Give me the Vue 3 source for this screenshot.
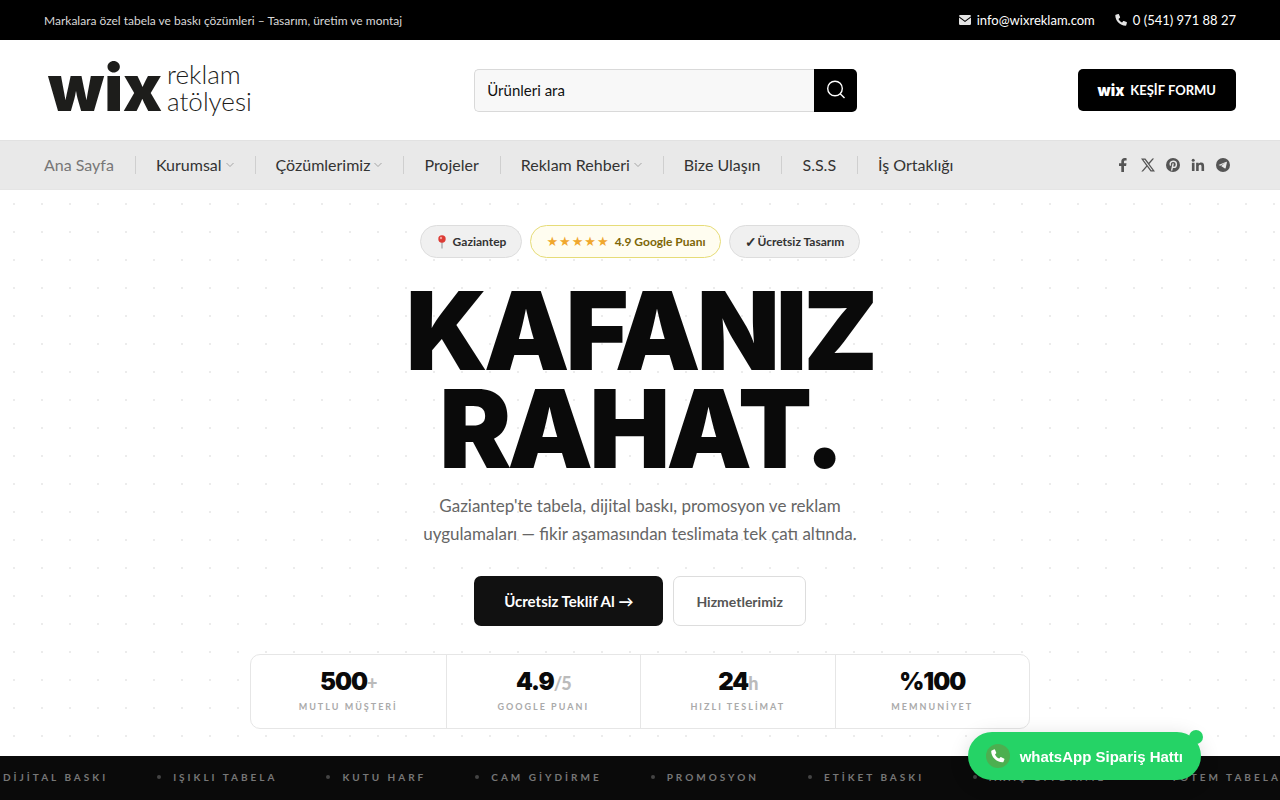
<script setup>
import { ref } from 'vue';

const search = ref('');

const menu = [
  { label: 'Ana Sayfa', active: true },
  { label: 'Kurumsal', children: true },
  { label: 'Çözümlerimiz', children: true },
  { label: 'Projeler' },
  { label: 'Reklam Rehberi', children: true },
  { label: 'Bize Ulaşın' },
  { label: 'S.S.S' },
  { label: 'İş Ortaklığı' },
];

const stats = [
  { value: '500', suffix: '+', label: 'MUTLU MÜŞTERİ' },
  { value: '4.9', suffix: '/5', label: 'GOOGLE PUANI' },
  { value: '24', suffix: 'h', label: 'HIZLI TESLİMAT' },
  { value: '%100', suffix: '', label: 'MEMNUNİYET' },
];

const services = [
  'DİJİTAL BASKI',
  'IŞIKLI TABELA',
  'KUTU HARF',
  'CAM GİYDİRME',
  'PROMOSYON',
  'ETİKET BASKI',
  'ARAÇ GİYDİRME',
  'TOTEM TABELA',
];
</script>

<template>
  <div class="page">
    <div class="topbar">
      <span class="slogan">Markalara özel tabela ve baskı çözümleri – Tasarım, üretim ve montaj</span>
      <div class="contacts">
        <a href="#">
          <svg width="12" height="10" viewBox="0 0 12 10">
            <path d="M0 1.2Q0 0 1.2 0h9.600Q12 0 12 1.200L6 5.700 0 1.200z" fill="#e4e4e4" />
            <path d="M0 2.500l6 4.500 6-4.500v6.300q0 1.200-1.200 1.200H1.200Q0 10 0 8.800z" fill="#e4e4e4" />
          </svg>
          info@wixreklam.com
        </a>
        <a href="#">
          <svg width="12" height="12" viewBox="0 0 24 24">
            <path d="M1.500 1.500L6.500.2c.6-.1 1.100.1 1.400.7l2.200 5.300c.2.500.1 1-.3 1.300L7 9.800c1.600 3.200 4 5.600 7.200 7.200l2.300-2.800c.3-.4.800-.5 1.300-.3l5.300 2.200c.6.300.8.800.7 1.400l-1.300 5c-.1.600-.600.900-1.200.9C9.700 23.400.6 14.300.6 2.700c0-.6.400-1.100.9-1.200z" fill="#e4e4e4" />
          </svg>
          0 (541) 971 88 27
        </a>
      </div>
    </div>

    <header class="header">
      <a href="#" class="logo">
        <span class="logo-mark">wix</span>
        <span class="logo-name">reklam<br>atölyesi</span>
      </a>
      <form class="search" @submit.prevent>
        <input v-model="search" type="text" placeholder="Ürünleri ara" aria-label="Ürünleri ara">
        <button type="submit" aria-label="Ara">
          <svg width="20" height="20" viewBox="0 0 20 20" fill="none" stroke="#fff" stroke-width="1.4">
            <circle cx="9" cy="8.500" r="7.300" />
            <path d="M14.200 13.700L18.500 18" />
          </svg>
        </button>
      </form>
      <a href="#" class="form-button"><span class="mini-mark">wix</span>KEŞİF FORMU</a>
    </header>

    <nav class="nav">
      <ul class="menu">
        <li v-for="item in menu" :key="item.label">
          <a href="#" :class="{ active: item.active }">
            {{ item.label }}
            <svg v-if="item.children" width="8" height="6" viewBox="0 0 8 6" fill="none" stroke="#a5a5a5">
              <path d="M.5 1L4 4.500 7.500 1" />
            </svg>
          </a>
        </li>
      </ul>
      <div class="social">
        <a href="#" aria-label="Facebook">
          <svg width="14" height="14" viewBox="0 0 14 14">
            <path d="M5.300 14V7.900H3V5.300h2.300V3.600C5.300 1.300 6.600 0 8.700 0c1 0 1.900.2 1.900.2v2.200H9.400C8.300 2.400 8 3 8 3.700v1.600h2.500l-.4 2.600H8V14z" />
          </svg>
        </a>
        <a href="#" aria-label="X">
          <svg width="14" height="14" viewBox="0 0 14 14">
            <path d="M0 .5h4.400l3.200 4.300L11.400.5h1.700L8.400 5.900l5.600 7.600H9.600L6.100 8.800 2 13.500H.3l5-5.700zm2.400 1.200l7.900 10.600h1.300L3.700 1.700z" />
          </svg>
        </a>
        <a href="#" aria-label="Pinterest">
          <svg width="14" height="14" viewBox="0 0 14 14">
            <circle cx="7" cy="7" r="7" />
            <path d="M4.600 7.600C3.300 5.200 4.900 3.200 7.200 3.200c2 0 3.200 1.300 3.200 3 0 1.900-1.100 3.200-2.500 3.200-.7 0-1.200-.4-1.400-.9M7.200 5.300L5.600 12.600" fill="none" stroke="#e9e9e9" stroke-width="1.400" />
          </svg>
        </a>
        <a href="#" aria-label="LinkedIn">
          <svg width="14" height="14" viewBox="0 0 14 14">
            <circle cx="2.200" cy="2.200" r="1.500" />
            <path d="M.9 4.700h2.600V13H.9zM5.100 4.700h2.500v1.100c.4-.7 1.300-1.300 2.500-1.300 2.500 0 3 1.600 3 3.900V13h-2.600V8.900c0-1 0-2.200-1.300-2.200S7.700 7.700 7.700 8.800V13H5.100z" />
          </svg>
        </a>
        <a href="#" aria-label="Telegram">
          <svg width="14" height="14" viewBox="0 0 14 14">
            <circle cx="7" cy="7" r="7" />
            <path d="M2.500 7.100l7.900-3.300c.4-.1.600.1.500.6l-1.200 5.700c-.1.400-.4.500-.8.300L5.100 8.100l4.200-3.300-5 2.900z" fill="#e9e9e9" />
          </svg>
        </a>
      </div>
    </nav>

    <main class="hero">
      <div class="badges">
        <span class="badge">
          <svg width="12" height="14" viewBox="0 0 12 14">
            <path d="M5.500 6h1v7l-.5 1-.5-1z" fill="#8d8f94" />
            <circle cx="6" cy="4" r="3.700" fill="#dd3b35" />
            <circle cx="5" cy="3" r="1.200" fill="#f2a09a" />
          </svg>
          Gaziantep
        </span>
        <span class="badge gold"><span class="stars">★★★★★</span>4.9 Google Puanı</span>
        <span class="badge tight"><span class="tick">✓</span>Ücretsiz Tasarım</span>
      </div>

      <h1>KAFANIZ<br>RAHAT.</h1>
      <p class="lead">
        Gaziantep'te tabela, dijital baskı, promosyon ve reklam uygulamaları — fikir aşamasından teslimata tek çatı altında.
      </p>

      <div class="actions">
        <a href="#" class="primary">Ücretsiz Teklif Al →</a>
        <a href="#" class="secondary">Hizmetlerimiz</a>
      </div>

      <div class="stats">
        <div v-for="stat in stats" :key="stat.label" class="stat">
          <div class="stat-value">{{ stat.value }}<span>{{ stat.suffix }}</span></div>
          <div class="stat-label">{{ stat.label }}</div>
        </div>
      </div>
    </main>

    <div class="ticker">
      <div class="track">
        <span v-for="service in services" :key="service" class="service">{{ service }}</span>
      </div>
    </div>

    <a href="#" class="whatsapp">
      <svg width="24" height="24" viewBox="0 0 24 24">
        <circle cx="12" cy="12" r="12" fill="#4caf50" />
        <path d="M5.800 6.400l2.100-1c.5-.2.900 0 1.100.4l1.200 2.600c.2.400.1.800-.2 1.100l-1 .9c.8 1.800 2.400 3.400 4.200 4.200l1-1.200c.3-.3.700-.4 1.100-.2l2.700 1.200c.4.200.6.600.4 1.100l-.9 2.200c-.2.400-.5.600-.9.600C10.300 18.100 5.200 13 5.200 7.300c0-.4.200-.7.600-.9z" fill="#fff" />
      </svg>
      whatsApp Sipariş Hattı
      <span class="ping"></span>
    </a>
  </div>
</template>

<style>
body {
  margin: 0;
  background: #000;
}
</style>

<style scoped>
* {
  box-sizing: border-box;
}

.page {
  height: 100vh;
  overflow: hidden;
  background: #0a0a0a;
  font-family: Lato, "Open Sans", sans-serif;
  color: #333;
}

a {
  color: inherit;
  text-decoration: none;
}

.topbar {
  display: flex;
  align-items: center;
  justify-content: space-between;
  height: 40px;
  padding: 0 44px;
  background: #000;
  color: #fff;
  font-size: 13px;
}

.slogan {
  color: #d8d8d8;
  font-size: 12px;
}

.contacts {
  display: flex;
  gap: 20px;
}

.contacts a {
  display: flex;
  align-items: center;
  gap: 6px;
}

.header {
  display: flex;
  align-items: center;
  justify-content: space-between;
  height: 100px;
  padding: 0 44px;
  background: #fff;
}

.logo {
  display: flex;
  align-items: center;
  gap: 5px;
  width: 210px;
  padding-left: 4px;
  color: #1d1d1b;
}

.logo-mark {
  padding-bottom: 4px;
  font-family: Inter, sans-serif;
  font-size: 64px;
  font-weight: 900;
  line-height: 64px;
}

.logo-name {
  padding-bottom: 4px;
  font-size: 26px;
  font-weight: 300;
  line-height: 27px;
}

.search {
  display: flex;
  width: 383px;
  height: 43px;
}

.search input {
  flex: 1;
  min-width: 0;
  padding: 0 12px;
  border: 1px solid #d9d9d9;
  border-right: 0;
  border-radius: 5px 0 0 5px;
  background: #f8f8f8;
  font-family: inherit;
  font-size: 15px;
}

.search input::placeholder {
  color: #111;
  opacity: 1;
}

.search button {
  display: flex;
  align-items: center;
  justify-content: center;
  width: 43px;
  padding: 0;
  border: 0;
  border-radius: 0 5px 5px 0;
  background: #000;
  cursor: pointer;
}

.form-button {
  display: flex;
  align-items: center;
  gap: 6px;
  height: 42px;
  padding: 0 20px;
  border-radius: 5px;
  background: #000;
  color: #fff;
  font-size: 13px;
  font-weight: 700;
}

.mini-mark {
  font-family: Inter, sans-serif;
  font-size: 15px;
  font-weight: 900;
}

.nav {
  display: flex;
  align-items: center;
  justify-content: space-between;
  height: 50px;
  padding: 0 44px;
  border-top: 1px solid #e2e2e2;
  border-bottom: 1px solid #e5e5e5;
  background: #e9e9e9;
}

.menu {
  display: flex;
  margin: 0;
  padding: 0;
  list-style: none;
}

.menu li {
  padding: 0 21px 0 20px;
  border-right: 1px solid #cfcfcf;
  font-size: 16px;
  line-height: 18px;
}

.menu li:first-child {
  padding-left: 0;
}

.menu li:last-child {
  border-right: 0;
}

.menu a {
  display: flex;
  align-items: center;
  gap: 4px;
}

.menu .active {
  color: #777;
}

.social {
  display: flex;
  gap: 11px;
  padding-right: 6px;
}

.social svg {
  display: block;
  fill: #555;
}

.hero {
  display: flex;
  flex-direction: column;
  align-items: center;
  padding: 35px 20px 27px;
  background: #fff radial-gradient(circle, #ececec 1px, transparent 1px) 0 0 / 28px 28px;
}

.badges {
  display: flex;
  gap: 8px;
}

.badge {
  display: flex;
  align-items: center;
  gap: 5px;
  height: 33px;
  padding: 0 15px;
  border: 1px solid #ddd;
  border-radius: 17px;
  background: #f0f0f0;
  font-size: 12px;
  font-weight: 700;
}

.badge.gold {
  border-color: #e6dc78;
  background: #fffdf0;
  color: #7d6608;
}

.badge.tight {
  gap: 0;
}

.stars {
  color: #f0a72d;
  font-family: "DejaVu Sans", sans-serif;
  font-size: 13px;
  letter-spacing: 1px;
}

.tick {
  font-size: 14px;
}

h1 {
  margin: 24px 0 14px;
  color: #0a0a0a;
  font-family: Inter, sans-serif;
  font-size: 108px;
  font-weight: 900;
  line-height: 98px;
  letter-spacing: -4px;
  text-align: center;
}

.lead {
  max-width: 480px;
  margin: 0 0 28px;
  color: #666;
  font-size: 17px;
  line-height: 28px;
  text-align: center;
}

.actions {
  display: flex;
  gap: 10px;
}

.primary,
.secondary {
  display: flex;
  align-items: center;
  height: 50px;
  border-radius: 7px;
  font-weight: 700;
}

.primary {
  padding: 0 30px;
  background: #111;
  color: #fff;
  font-size: 15px;
}

.secondary {
  padding: 0 22px;
  border: 1px solid #ddd;
  background: #fff;
  color: #555;
  font-size: 14px;
}

.stats {
  display: grid;
  grid-template-columns: repeat(4, 1fr);
  width: 100%;
  max-width: 780px;
  margin-top: 28px;
  border: 1px solid #e6e6e6;
  border-radius: 10px;
  background: #fff;
}

.stat {
  padding: 13px 0 15px;
  text-align: center;
}

.stat + .stat {
  border-left: 1px solid #e6e6e6;
}

.stat-value {
  height: 27px;
  color: #0a0a0a;
  font-family: Inter, sans-serif;
  font-size: 24px;
  font-weight: 900;
  line-height: 27px;
  letter-spacing: -1px;
}

.stat-value span {
  color: #bbb;
  font-family: Lato, sans-serif;
  font-size: 18px;
}

.stat-label {
  margin-top: 6px;
  color: #aaa;
  font-size: 9px;
  font-weight: 700;
  line-height: 12px;
  letter-spacing: 2px;
}

.ticker {
  overflow: hidden;
  padding: 14px 0;
  background: #0a0a0a;
}

.track {
  display: flex;
  width: max-content;
  gap: 49px;
  margin-left: -13px;
}

.service {
  display: flex;
  align-items: center;
  gap: 12px;
  color: #777;
  font-size: 10px;
  font-weight: 700;
  line-height: 14px;
  letter-spacing: 3px;
}

.service::before {
  content: "";
  width: 4px;
  height: 4px;
  border-radius: 50%;
  background: #444;
}

.whatsapp {
  position: fixed;
  right: 79px;
  bottom: 20px;
  display: flex;
  align-items: center;
  gap: 10px;
  height: 48px;
  padding: 0 18px;
  border-radius: 24px;
  background: #25d366;
  box-shadow: 0 4px 20px rgba(0, 0, 0, 0.15);
  color: #fff;
  font-family: "Liberation Sans", Arial, sans-serif;
  font-size: 15px;
  font-weight: 700;
}

.ping {
  position: absolute;
  top: -2px;
  right: -2px;
  width: 14px;
  height: 14px;
  border-radius: 50%;
  background: #25d366;
}
</style>
